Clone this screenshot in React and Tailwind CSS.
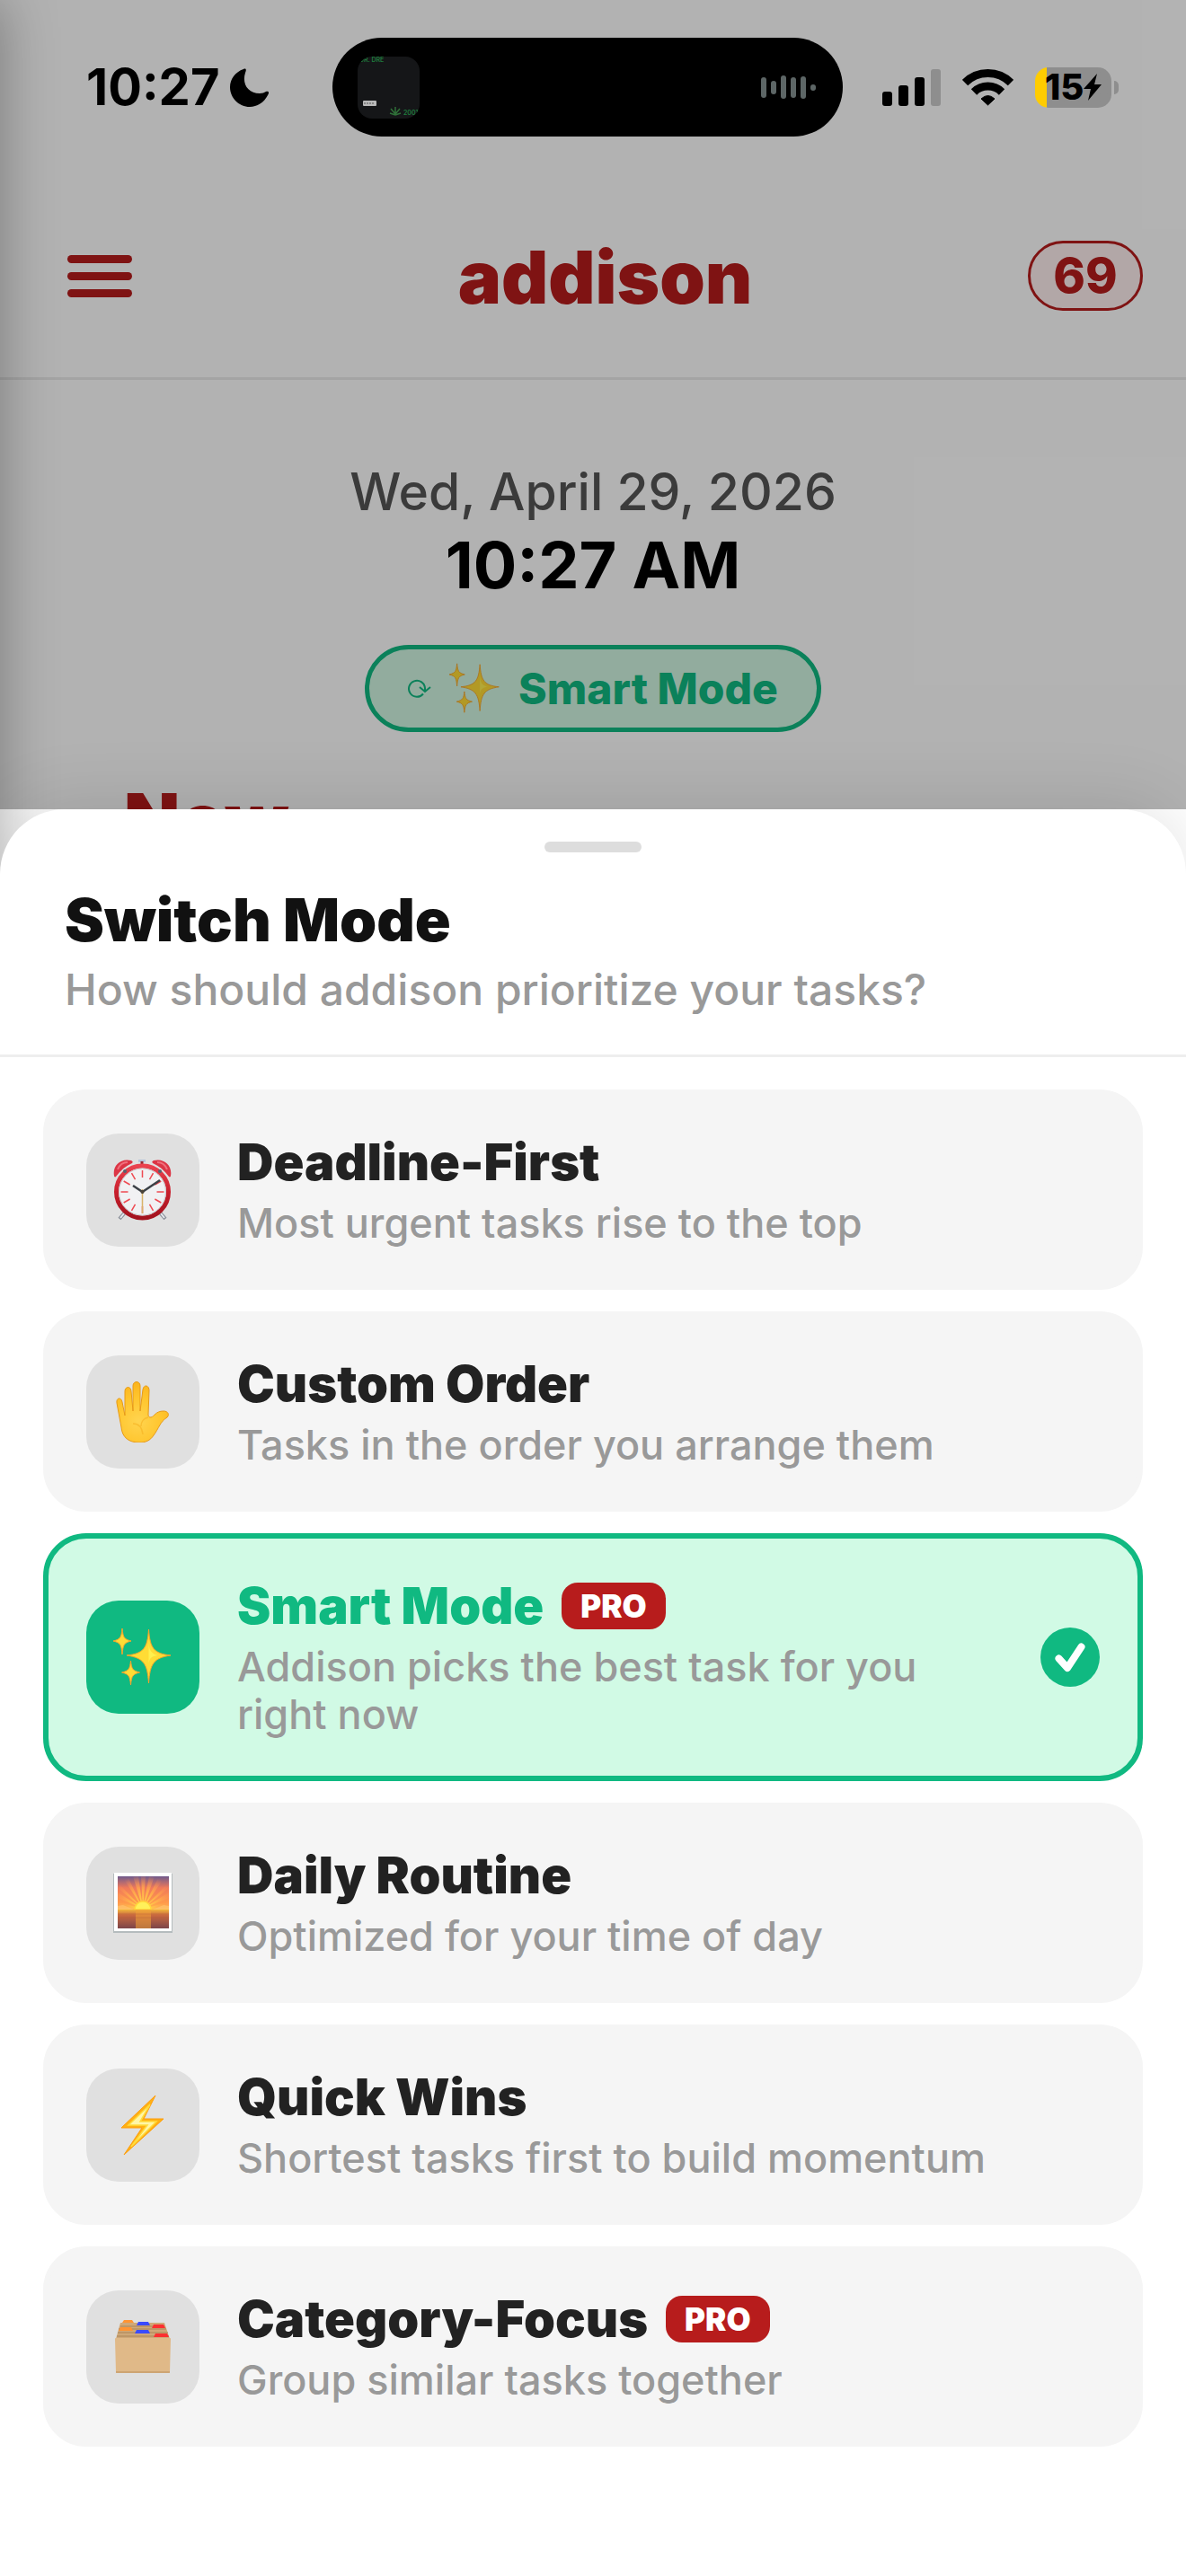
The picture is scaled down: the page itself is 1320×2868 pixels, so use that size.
import { useState } from 'react';

// Emoji-style drawings used for the modes
function AlarmEmoji() {
  return (
    <svg width="66" height="69" viewBox="0 0 66 69" aria-hidden="true">
      <defs>
        <linearGradient id="alarmRing" x1="0" y1="0" x2="0" y2="1">
          <stop offset="0" stopColor="#ea4350" />
          <stop offset="0.5" stopColor="#c81f2c" />
          <stop offset="1" stopColor="#a3131f" />
        </linearGradient>
      </defs>
      <path d="M13 60L7 67M52 60l6 7" stroke="#8a8f98" strokeWidth="4" />
      <path d="M12 61L8 66M53 61l4 5" stroke="#e5e8ee" strokeWidth="2" />
      <path d="M28 1h8v3h-8z" fill="#b5c6dc" />
      <path d="M32 3v6" stroke="#9b2730" strokeWidth="3" />
      <path d="M1 19C-1 8 8 -1 20 2c2 1 2 2 1 3C14 8 8 13 3 20c-1 1-2 0-2-1z" fill="#dc3545" />
      <path d="M64 19C66 8 57-1 45 2c-2 1-2 2-1 3 7 3 13 8 18 15 1 1 2 0 2-1z" fill="#dc3545" />
      <path d="M5 12C7 7 11 4 16 4M49 4c5 0 9 3 11 8" stroke="#f0707c" strokeWidth="2" fill="none" />
      <circle cx="32.500" cy="37" r="29" fill="#f1f1f3" stroke="url(#alarmRing)" strokeWidth="5" />
      <circle cx="32.500" cy="37" r="26" fill="none" stroke="#c9c9cd" />
      <circle cx="13" cy="14" r="2" fill="#56616e" />
      <circle cx="52" cy="14" r="2" fill="#56616e" />
      <g stroke="#ee4a52" strokeWidth="1.500">
        {[...Array(12)].map((_, i) => (
          <path key={i} d="M32.500 13v8" transform={`rotate(${i * 30} 32.500 37)`} />
        ))}
      </g>
      <path d="M32.500 34v27" stroke="#d9b36a" strokeWidth="1.500" />
      <path d="M22 30l10.500 7L52 24" fill="none" stroke="#3b4046" strokeWidth="2.500" />
      <circle cx="32.500" cy="37" r="2" fill="#4b4338" />
    </svg>
  );
}

function HandEmoji() {
  return (
    <svg width="66" height="68" viewBox="0 0 66 68" aria-hidden="true">
      <defs>
        <radialGradient id="handSkin" gradientUnits="userSpaceOnUse" cx="28" cy="44" r="44">
          <stop offset="0" stopColor="#ffd44f" />
          <stop offset="0.6" stopColor="#ffc52d" />
          <stop offset="1" stopColor="#fbb31c" />
        </radialGradient>
      </defs>
      <path
        d="M4 24c-1-6 5-7 6-1l3 15V11c0-6 7-6 7 0l2 22V5c0-6 8-6 8 0v28l3-24c1-6 7-5 7 1l-1 27c0 2 1 3 3 3 4-1 5-7 14-7 5 0 7 4 4 7-8 5-9 12-15 20-4 6-9 8-16 8-11 0-19-5-20-17z"
        fill="url(#handSkin)"
        stroke="#e79a18"
        strokeWidth="1"
        strokeLinejoin="round"
      />
      <path d="M22 47c6 0 10 4 11 12M39 40c-5 1-8 5-8 10" stroke="#f5b021" strokeWidth="1.500" fill="none" opacity="0.600" />
    </svg>
  );
}

function SparklesEmoji({ className }) {
  return (
    <svg className={className} viewBox="0 0 66 66" aria-hidden="true">
      <g fill="#ffdc35" stroke="#f5a32c" strokeWidth="1" strokeLinejoin="round">
        <path d="M39.500 2C41 23 45 29 64 31 45 34 41 40 39.500 62 38 40 34 34 15 31 34 29 38 23 39.500 2z" />
        <path d="M10 1c1 10 2 12 10 14-8 2-9 4-10 15-1-11-2-13-10-15 8-2 9-4 10-14z" />
        <path d="M19.500 37c1 9 2 11 10 13-8 2-9 4-10 14-1-10-2-12-10-14 8-2 9-4 10-13z" />
      </g>
      <path d="M39.500 18c1 8 3 11 10 13-7 1-9 3-10 9z" fill="#fff04f" />
    </svg>
  );
}

function SunriseEmoji() {
  return (
    <svg width="66" height="67" viewBox="0 0 66 67" aria-hidden="true">
      <defs>
        <linearGradient id="sky" x1="0" y1="0" x2="0" y2="1">
          <stop offset="0" stopColor="#6f5a8c" />
          <stop offset="0.35" stopColor="#f0795a" />
          <stop offset="0.8" stopColor="#ff9a4a" />
          <stop offset="1" stopColor="#ffc04a" />
        </linearGradient>
        <linearGradient id="sea" x1="0" y1="0" x2="0" y2="1">
          <stop offset="0" stopColor="#f2b63c" />
          <stop offset="0.3" stopColor="#c9683f" />
          <stop offset="1" stopColor="#7c4549" />
        </linearGradient>
        <radialGradient id="glow" gradientUnits="userSpaceOnUse" cx="33" cy="38" r="36">
          <stop offset="0" stopColor="#ffe14a" />
          <stop offset="0.5" stopColor="#ffab4c" />
          <stop offset="1" stopColor="#ff8f58" stopOpacity="0" />
        </radialGradient>
      </defs>
      <rect y="1" width="66" height="66" fill="#b5bcbe" />
      <rect x="1" width="64" height="65" fill="#fff" />
      <rect x="5" y="4" width="57" height="37" fill="url(#sky)" />
      <g fill="url(#glow)">
        <path d="M33 40L5 33v7zM33 40L5 22v6zM33 40L5 11v6zM33 40L10 4h6zM33 40L22 4h6zM33 40L31 4h5zM33 40L40 4h6zM33 40L51 4h7zM33 40l29-29v6zM33 40l29-18v6zM33 40l29-7v7z" />
      </g>
      <path d="M5 41v-4l6-1 5 2 7 3zM62 41v-4l-6-1-5 2-7 3z" fill="#ffc56e" opacity="0.700" />
      <path d="M24 41a9 9 0 0118 0z" fill="#fff05a" stroke="#ffd83b" strokeWidth="1.500" />
      <rect x="5" y="41" width="57" height="21" fill="url(#sea)" />
      <path d="M25 41h17v21H25z" fill="#f2a337" opacity="0.550" />
      <path d="M5 46h57M5 50h57" stroke="#b2583c" opacity="0.350" />
    </svg>
  );
}

function BoltEmoji() {
  return (
    <svg width="66" height="68" viewBox="0 0 66 68" aria-hidden="true">
      <path d="M47 1L34 27h22L12 67l20-30H9z" fill="#ffb114" stroke="#ff9d0a" strokeLinejoin="round" />
      <path d="M41 11L17 34h21L20 58l28-28H30z" fill="#fff6a8" stroke="#ffdc3c" strokeWidth="1.500" />
    </svg>
  );
}

function FilesEmoji() {
  return (
    <svg width="66" height="62" viewBox="0 0 66 62" aria-hidden="true">
      <path d="M8 4h49l6 18H3z" fill="#cfa878" />
      <path d="M8 8h49M6 11h53M5 15h56M4 19h58" stroke="#ab8456" />
      <path d="M10 4l2-3h9l2 3z" fill="#ff9433" />
      <path d="M26 7l2-4h11l2 4z" fill="#3a4bff" />
      <path d="M43 10l2-4h11l2 4z" fill="#fb3030" />
      <path d="M6 13l2-4h12l2 4z" fill="#ff9433" />
      <path d="M24 16l2-4h13l2 4z" fill="#3a4bff" />
      <path d="M45 20l2-4h13l2 4z" fill="#fb3030" />
      <path d="M2 22q0-1 1-1h60q1 0 1 1l-1 37q0 1-1 1H4q-1 0-1-1z" fill="#e0b988" />
      <path d="M3 59h60" stroke="#c99f6c" strokeWidth="1.500" />
    </svg>
  );
}

const MODES = [
  { id: 'deadline', name: 'Deadline-First', desc: 'Most urgent tasks rise to the top', icon: <AlarmEmoji /> },
  { id: 'custom', name: 'Custom Order', desc: 'Tasks in the order you arrange them', icon: <HandEmoji /> },
  {
    id: 'smart',
    name: 'Smart Mode',
    desc: 'Addison picks the best task for you right now',
    icon: <SparklesEmoji className="size-[66px]" />,
    pro: true,
  },
  { id: 'routine', name: 'Daily Routine', desc: 'Optimized for your time of day', icon: <SunriseEmoji /> },
  { id: 'quick', name: 'Quick Wins', desc: 'Shortest tasks first to build momentum', icon: <BoltEmoji /> },
  { id: 'category', name: 'Category-Focus', desc: 'Group similar tasks together', icon: <FilesEmoji />, pro: true },
];

function StatusBar() {
  return (
    <div className="relative z-10 grid h-[194px] grid-cols-[370fr_568fr_382fr] items-center text-black">
      <div className="flex items-center gap-3 pl-24">
        <span className="text-[56px] leading-none font-bold">10:27</span>
        <svg width="43" height="43" viewBox="0 0 43 43" aria-hidden="true">
          <path d="M15 1C18-.5 18.500 2 17 5c-4 12 3 23 16 23 3 0 5-1 7-2 3-1 4 1 2 4-4 8-12 13-20 13C10 43 0 33 0 21 0 12 6 4 15 1z" />
        </svg>
      </div>

      {/* Dynamic island with the now-playing activity */}
      <div className="flex h-[110px] items-center justify-between rounded-full bg-black px-7">
        <svg width="69" height="69" viewBox="0 0 69 69" aria-hidden="true">
          <clipPath id="art">
            <rect width="69" height="69" rx="16" />
          </clipPath>
          <g clipPath="url(#art)" fontFamily="Inter, sans-serif" fontWeight="600">
            <rect width="69" height="69" fill="#151618" />
            <text x="2" y="6" fontSize="7" fill="#1f7a3d">DR. DRE</text>
            <rect x="6" y="49" width="15" height="6" rx="1" fill="#b9b9b9" />
            <path d="M7 52h12" stroke="#555" strokeDasharray="2 1" />
            <path
              d="M42 56v9M42 64l-5-6M42 64l5-6M42 65l-6-2M42 65l6-2"
              stroke="#2f7038"
              strokeWidth="1.500"
              fill="none"
            />
            <text x="51" y="65" fontSize="7" fill="#1f7a3d">2001</text>
          </g>
        </svg>
        <svg width="63" height="26" viewBox="0 0 63 26" fill="#5d6666" aria-hidden="true">
          <rect x="0" y="2" width="6" height="23" rx="3" />
          <rect x="11" y="6" width="6" height="15" rx="3" />
          <rect x="22" y="0" width="6" height="26" rx="3" />
          <rect x="33" y="2" width="6" height="23" rx="3" />
          <rect x="44" y="1" width="6" height="25" rx="3" />
          <rect x="55" y="10" width="6" height="7" rx="3" />
        </svg>
      </div>

      <div className="flex items-center gap-6 pl-11">
        <svg width="65" height="42" viewBox="0 0 65 42" aria-hidden="true">
          <rect x="0" y="26" width="11" height="16" rx="3" />
          <rect x="18" y="19" width="11" height="23" rx="3" />
          <rect x="36" y="10" width="11" height="32" rx="3" />
          <rect x="54" y="1" width="11" height="41" rx="3" fill="#8e8e8e" />
        </svg>
        <svg width="57" height="42" viewBox="0 0 57 42" fill="none" stroke="#000" strokeWidth="9" aria-hidden="true">
          <path d="M3 16a36 36 0 0151 0" />
          <path d="M13 26.500a22 22 0 0131 0" />
          <path d="M21 34q7.500-7 15 0L28.500 41z" fill="#000" strokeWidth="1" />
        </svg>
        <div className="flex items-center gap-[3px]">
          <div className="flex h-[45px] w-[85px] items-center justify-center rounded-[15px] bg-linear-to-r from-[#ffcc00] from-[15%] to-[#8e8e8e] to-[15%]">
            <span className="text-[40px] leading-none font-extrabold">15</span>
            <svg width="20" height="30" viewBox="0 0 20 30" aria-hidden="true">
              <path d="M15 0L0 17h8L5 30l15-18h-8z" />
            </svg>
          </div>
          <div className="h-[15px] w-[5px] rounded-r-full bg-[#8e8e8e]" />
        </div>
      </div>
    </div>
  );
}

function HomeScreen() {
  return (
    <>
      <header className="flex h-[229px] items-center justify-between border-b-3 border-[#ebebeb] pr-12 pl-[75px] text-[#b71c1c]">
        <button type="button" aria-label="Menu" className="flex w-[128px] flex-col gap-[10px]">
          <span className="h-[9px] w-[72px] rounded-full bg-[#b71c1c]" />
          <span className="h-[9px] w-[72px] rounded-full bg-[#b71c1c]" />
          <span className="h-[9px] w-[72px] rounded-full bg-[#b71c1c]" />
        </button>
        <h1 className="pt-1 text-[81px] leading-none font-black">addison</h1>
        <button
          type="button"
          className="flex h-[78px] w-[128px] items-center justify-center rounded-full border-3 border-[#b71c1c] bg-[#fff0f0] text-[54px] leading-none font-extrabold"
        >
          69
        </button>
      </header>

      <div className="flex flex-col items-center pt-[86px]">
        <p className="text-[57px] leading-[78px] font-medium text-[#555]">Wed, April 29, 2026</p>
        <p className="text-[72px] leading-[84px] font-bold text-black">10:27 AM</p>
        <button
          type="button"
          className="mt-[47px] flex h-[97px] items-center gap-5 rounded-full border-5 border-[#10b981] bg-[#d1f6e3] px-[43px] text-[48px] leading-none font-extrabold text-[#10b981]"
        >
          <svg width="26" height="22" viewBox="0 0 26 22" fill="none" stroke="currentColor" strokeWidth="2" aria-hidden="true">
            <path d="M17 16.500A9 9 0 1119 10v4M13 9l6 5 6-5" />
          </svg>
          <SparklesEmoji className="size-[57px]" />
          Smart Mode
        </button>
      </div>
      <h2 className="mt-[50px] pl-[138px] text-[81px] leading-24 font-black text-[#b71c1c]">Now</h2>
    </>
  );
}

function ModeCard({ mode, active, onSelect }) {
  return (
    <button
      type="button"
      aria-pressed={active}
      onClick={() => onSelect(mode.id)}
      className={`flex w-full items-center gap-[42px] rounded-[48px] border-6 p-[42px] text-left ${
        active ? 'border-[#10b981] bg-[#d1fae5]' : 'border-[#f5f5f5] bg-[#f5f5f5]'
      }`}
    >
      <span
        className={`flex size-[126px] shrink-0 items-center justify-center rounded-[36px] ${
          active ? 'bg-[#10b981]' : 'bg-[#e0e0e0]'
        }`}
      >
        {mode.icon}
      </span>
      <span className="flex flex-1 flex-col gap-2">
        <span className="flex items-center gap-5">
          <span className={`text-[56px] leading-[66px] font-black ${active ? 'text-[#10b981]' : 'text-[#222]'}`}>
            {mode.name}
          </span>
          {mode.pro && (
            <span className="rounded-[18px] bg-[#b71c1c] px-[21px] text-[35px] leading-[52px] font-black text-white">
              PRO
            </span>
          )}
        </span>
        <span className="text-[45px] leading-[53px] font-medium text-[#999]">{mode.desc}</span>
      </span>
      {active && (
        <svg className="shrink-0" width="66" height="66" viewBox="0 0 66 66" aria-hidden="true">
          <circle cx="33" cy="33" r="33" fill="#10b981" />
          <path
            d="M20.500 34.500l9.500 10.500 15.500-23.500"
            fill="none"
            stroke="#fff"
            strokeWidth="8"
            strokeLinecap="round"
            strokeLinejoin="round"
          />
        </svg>
      )}
    </button>
  );
}

export default function App() {
  const [selected, setSelected] = useState('smart');

  return (
    <div className="relative flex h-screen flex-col overflow-hidden bg-white font-['Inter',sans-serif]">
      <div className="relative flex-1 basis-0 overflow-hidden">
        <div className="absolute inset-0 z-[5] bg-black/30" />
        <StatusBar />
        <HomeScreen />
      </div>

      {/* Shadow cast by the closed side drawer */}
      <div className="absolute inset-y-0 right-full w-80 shadow-[0_0_60px_rgba(0,0,0,0.32)]" />

      <section className="relative z-20 shrink-0 rounded-t-[72px] bg-white pb-36 shadow-[0_-12px_72px_rgba(0,0,0,0.1)]">
        <div className="border-b-3 border-[#eee] px-[72px] pt-9 pb-[42px]">
          <div className="mx-auto h-3 w-[108px] rounded-full bg-[#ddd]" />
          <h2 className="mt-9 text-[66px] leading-[78px] font-black text-[#111]">Switch Mode</h2>
          <p className="mt-[9px] text-[48px] leading-[60px] font-medium text-[#999]">
            How should addison prioritize your tasks?
          </p>
        </div>
        <div className="flex flex-col gap-6 px-12 pt-9">
          {MODES.map((mode) => (
            <ModeCard key={mode.id} mode={mode} active={mode.id === selected} onSelect={setSelected} />
          ))}
        </div>
      </section>
    </div>
  );
}
